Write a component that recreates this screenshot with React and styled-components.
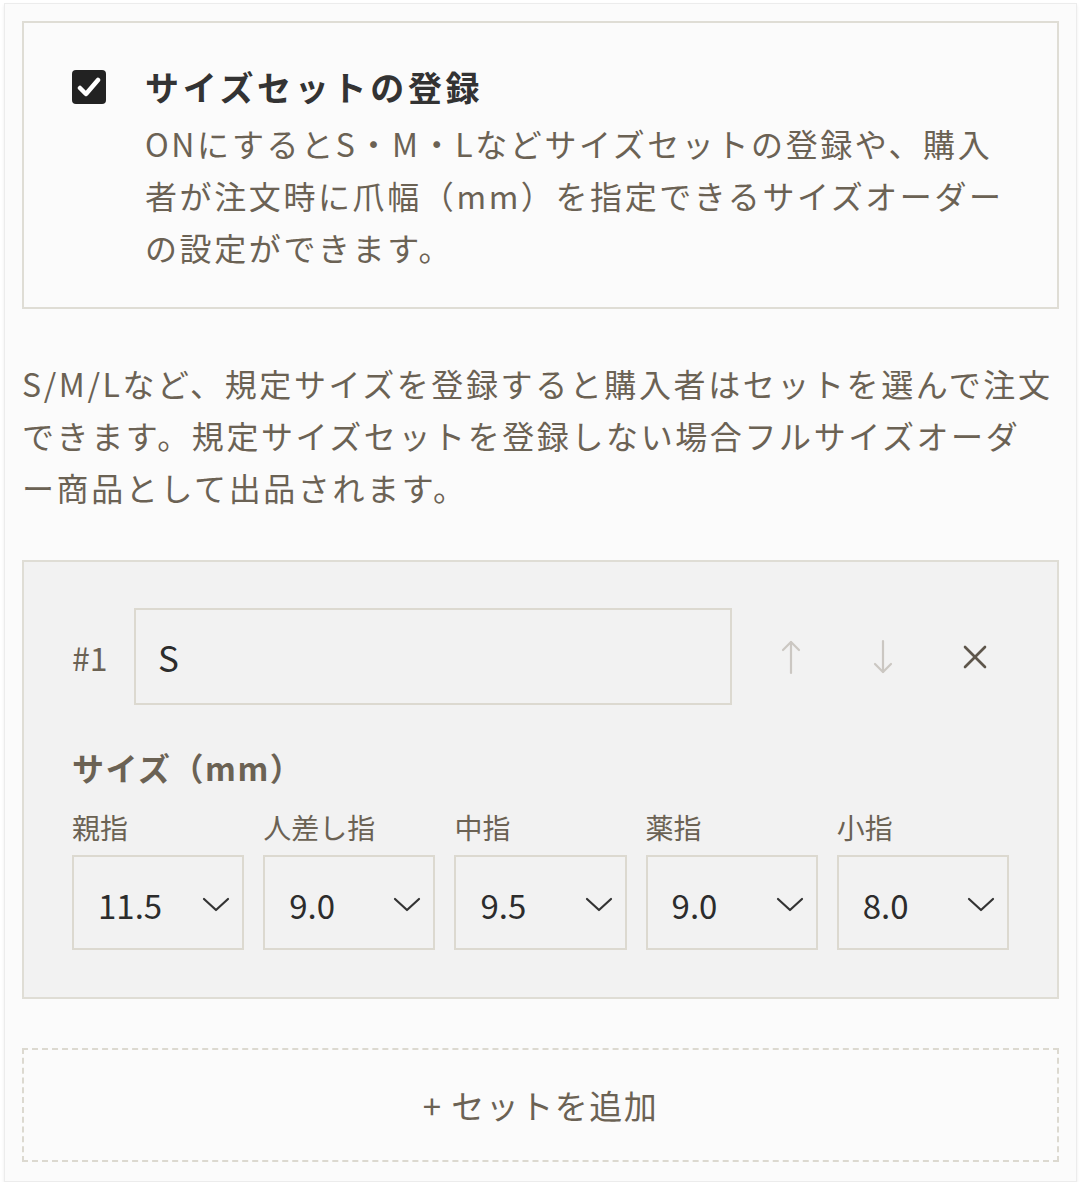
import React from 'react';
import styled, { createGlobalStyle } from 'styled-components';

const GlobalStyle = createGlobalStyle`
  html, body {
    margin: 0;
    padding: 0;
    background: #ffffff;
  }
  body {
    font-family: "Noto Sans CJK JP", "Noto Sans", sans-serif;
    -webkit-font-smoothing: antialiased;
  }
`;

const Card = styled.div`
  margin: 3px 5px 0 4px;
  padding: 17px 17px 19px 17px;
  background: #fbfbfb;
  border: 1px solid #ececec;
  box-shadow: 0 2px 3px rgba(0, 0, 0, 0.08);
`;

const OptionBox = styled.div`
  display: flex;
  align-items: flex-start;
  gap: 39px;
  padding: 39px 40px 34px 48px;
  border: 2px solid #dfddd5;
  background: #fbfbfb;
`;

const CheckMark = styled.span`
  flex: none;
  width: 34px;
  height: 34px;
  margin-top: 8px;
  border-radius: 4px;
  background: #222222;
  display: flex;
  align-items: center;
  justify-content: center;
`;

const OptionText = styled.div`
  display: flex;
  flex-direction: column;
`;

const OptionTitle = styled.div`
  font-size: 34px;
  font-weight: 700;
  line-height: 50px;
  letter-spacing: 3.7px;
  color: #333333;
`;

const Description = styled.p`
  margin: ${p => (p.$outside ? '48px 0 0' : '5px 0 0')};
  padding-right: ${p => (p.$outside ? '5px' : '0')};
  font-size: 32px;
  line-height: 52px;
  letter-spacing: 2.6px;
  color: #6b6254;
`;

const SetPanel = styled.div`
  margin-top: 47px;
  padding: 46px 48px 47px 48px;
  background: #f2f2f2;
  border: 2px solid #dfddd5;
`;

const SetRow = styled.div`
  display: flex;
  align-items: center;
`;

const SetNumber = styled.span`
  width: 62px;
  flex: none;
  font-size: 32px;
  color: #6b6254;
`;

const NameInput = styled.div`
  flex: 1;
  height: 97px;
  box-sizing: border-box;
  border: 2px solid #dcd9d0;
  background: #f2f2f2;
  display: flex;
  align-items: center;
  padding-left: 22px;
  font-size: 35px;
  color: #2c2c2c;
`;

const Actions = styled.div`
  display: flex;
  margin: 0 -12px 0 13px;
`;

const IconButton = styled.button`
  width: 92px;
  height: 60px;
  border: none;
  background: transparent;
  padding: 0;
  display: flex;
  align-items: center;
  justify-content: center;
  color: ${p => (p.$active ? '#5e564b' : '#cbc7c2')};
`;

const SizeTitle = styled.div`
  margin-top: 40px;
  font-size: 32px;
  font-weight: 700;
  line-height: 44px;
  letter-spacing: 1.5px;
  color: #6b6254;
`;

const FingerGrid = styled.div`
  margin-top: 18px;
  display: grid;
  grid-template-columns: repeat(5, 1fr);
  column-gap: 19px;
`;

const Finger = styled.div`
  display: flex;
  flex-direction: column;
  gap: 8px;
`;

const FingerLabel = styled.span`
  font-size: 28px;
  line-height: 40px;
  color: #6b6254;
`;

const SelectBox = styled.div`
  height: 95px;
  box-sizing: border-box;
  border: 2px solid #dcd9d0;
  display: flex;
  align-items: center;
  justify-content: space-between;
  padding: 4px 11px 0 24px;
  font-size: 33px;
  color: #2c2c2c;
`;

const AddButton = styled.div`
  margin-top: 49px;
  height: 114px;
  box-sizing: border-box;
  border: 2px dashed #dcd9d0;
  display: flex;
  align-items: center;
  justify-content: center;
  font-size: 33px;
  letter-spacing: 1.5px;
  color: #6b6254;
`;

const Chevron = () => (
  <svg width="30" height="18" viewBox="0 0 30 18" fill="none">
    <polyline points="3,3 15,14 27,3" stroke="#333" strokeWidth="2.2" strokeLinecap="round" strokeLinejoin="round" />
  </svg>
);

const ArrowUp = () => (
  <svg width="20" height="36" viewBox="0 0 20 36" fill="none" stroke="currentColor" strokeWidth="2.2" strokeLinecap="round" strokeLinejoin="round">
    <line x1="10" y1="3" x2="10" y2="34" />
    <polyline points="2,11 10,3 18,11" />
  </svg>
);

const ArrowDown = () => (
  <svg width="20" height="36" viewBox="0 0 20 36" fill="none" stroke="currentColor" strokeWidth="2.2" strokeLinecap="round" strokeLinejoin="round">
    <line x1="10" y1="2" x2="10" y2="33" />
    <polyline points="2,25 10,33 18,25" />
  </svg>
);

const Cross = () => (
  <svg width="26" height="26" viewBox="0 0 26 26" fill="none" stroke="currentColor" strokeWidth="2.6" strokeLinecap="round">
    <line x1="3" y1="3" x2="23" y2="23" />
    <line x1="23" y1="3" x2="3" y2="23" />
  </svg>
);

const fingers = [
  { label: '親指', value: '11.5' },
  { label: '人差し指', value: '9.0' },
  { label: '中指', value: '9.5' },
  { label: '薬指', value: '9.0' },
  { label: '小指', value: '8.0' },
];

export default function App() {
  return (
    <>
      <GlobalStyle />
      <Card>
        <OptionBox>
          <CheckMark>
            <svg width="24" height="22" viewBox="0 0 24 22" fill="none">
              <polyline points="3,12 9,18 21,4" stroke="#fff" strokeWidth="4.5" strokeLinecap="round" strokeLinejoin="round" />
            </svg>
          </CheckMark>
          <OptionText>
            <OptionTitle>サイズセットの登録</OptionTitle>
            <Description>
              ONにするとS・M・Lなどサイズセットの登録や、購入者が注文時に爪幅（mm）を指定できるサイズオーダーの設定ができます。
            </Description>
          </OptionText>
        </OptionBox>

        <Description $outside>
          S/M/Lなど、規定サイズを登録すると購入者はセットを選んで注文できます。規定サイズセットを登録しない場合フルサイズオーダー商品として出品されます。
        </Description>

        <SetPanel>
          <SetRow>
            <SetNumber>#1</SetNumber>
            <NameInput>S</NameInput>
            <Actions>
              <IconButton><ArrowUp /></IconButton>
              <IconButton><ArrowDown /></IconButton>
              <IconButton $active><Cross /></IconButton>
            </Actions>
          </SetRow>

          <SizeTitle>サイズ（mm）</SizeTitle>
          <FingerGrid>
            {fingers.map(f => (
              <Finger key={f.label}>
                <FingerLabel>{f.label}</FingerLabel>
                <SelectBox>
                  <span>{f.value}</span>
                  <Chevron />
                </SelectBox>
              </Finger>
            ))}
          </FingerGrid>
        </SetPanel>

        <AddButton>+ セットを追加</AddButton>
      </Card>
    </>
  );
}
